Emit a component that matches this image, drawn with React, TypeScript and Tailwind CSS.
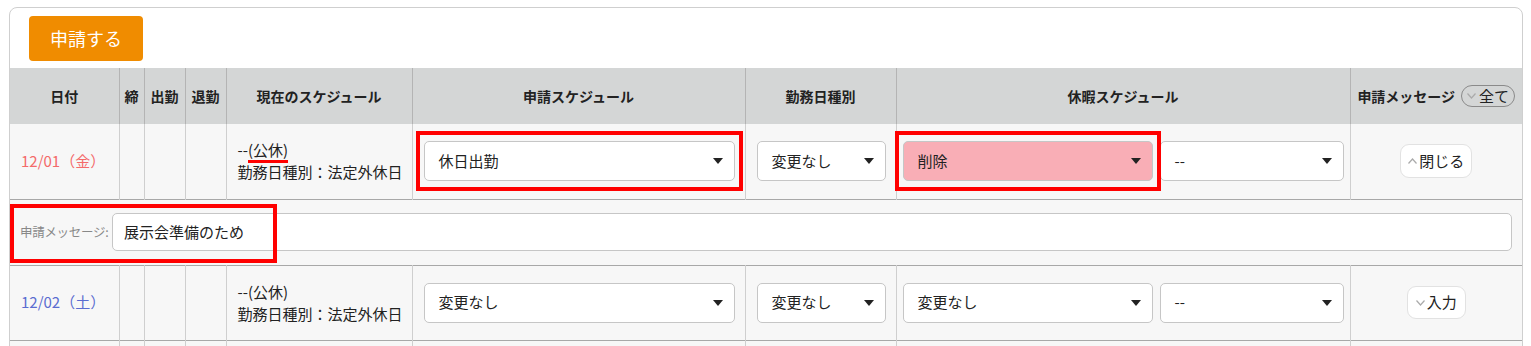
import type { ReactNode } from 'react';

const font = { fontFamily: '"Noto Sans CJK JP", "Noto Sans", sans-serif' };

function Caret() {
  return (
    <svg width="10" height="6" viewBox="0 0 10 6" className="shrink-0">
      <path d="M0 0 L10 0 L5 6 Z" fill="#222" />
    </svg>
  );
}

function Chevron({ up }: { up?: boolean }) {
  return (
    <svg width="9" height="6" viewBox="0 0 9 6" className="shrink-0">
      <polyline
        points={up ? '0.5,5.5 4.5,1 8.5,5.5' : '0.5,0.5 4.5,5 8.5,0.5'}
        fill="none"
        stroke="#aaa"
        strokeWidth="1.2"
      />
    </svg>
  );
}

function Select({ value, className = '', pink = false }: { value: string; className?: string; pink?: boolean }) {
  return (
    <div
      className={`h-[40px] flex items-center justify-between pl-[14px] pr-[11px] rounded-[5px] border border-[#c6c6c6] text-[15px] text-[#222] ${
        pink ? 'bg-[#f9aeb6]' : 'bg-white'
      } ${className}`}
    >
      <span>{value}</span>
      <Caret />
    </div>
  );
}

// red annotation frame drawn over a control
function Marked({ children, className = '' }: { children: ReactNode; className?: string }) {
  return (
    <div className={`relative ${className}`}>
      {children}
      <div className="absolute -left-[8px] -right-[8px] -top-[10px] -bottom-[10px] border-[4px] border-[#ff0000] pointer-events-none" />
    </div>
  );
}

const th = 'border-l border-[#b4b4b4] text-[14px] font-bold text-[#222] text-center';
const td = 'border-l border-[#cfcfcf] align-middle';

type Row = {
  date: string;
  dateColor: string;
  schedule: string;
  kind: string;
  leave: string;
  leaveSub: string;
  open: boolean;
  marked: boolean;
};

const rows: Row[] = [
  { date: '12/01（金）', dateColor: 'text-[#f46a6a]', schedule: '休日出勤', kind: '変更なし', leave: '削除', leaveSub: '--', open: true, marked: true },
  { date: '12/02（土）', dateColor: 'text-[#5a6cd0]', schedule: '変更なし', kind: '変更なし', leave: '変更なし', leaveSub: '--', open: false, marked: false },
];

function DayRow({ r }: { r: Row }) {
  return (
    <tr className="bg-[#f7f7f7] border-b border-[#a8a8a8] h-[75px]">
      <td className={`${td} border-l-0 pl-[11px] text-[15px] ${r.dateColor}`}>{r.date}</td>
      <td className={td}></td>
      <td className={td}></td>
      <td className={td}></td>
      <td className={`${td} pl-[11px] text-[15px] text-[#222] leading-[22px]`}>
        <div>
          --
          <span className="relative">
            (公休)
            {r.marked && <span className="absolute left-0 right-0 -bottom-[3px] h-[3px] bg-[#ff0000]" />}
          </span>
        </div>
        <div>勤務日種別：法定外休日</div>
      </td>
      <td className={`${td} pl-[11px] pr-[10px]`}>
        {r.marked ? (
          <Marked>
            <Select value={r.schedule} />
          </Marked>
        ) : (
          <Select value={r.schedule} />
        )}
      </td>
      <td className={`${td} pl-[11px] pr-[10px]`}>
        <Select value={r.kind} />
      </td>
      <td className={`${td} pl-[6px] pr-[6px]`}>
        <div className="flex gap-[7px]">
          {r.marked ? (
            <Marked className="w-[250px]">
              <Select value={r.leave} pink />
            </Marked>
          ) : (
            <Select value={r.leave} className="w-[250px]" />
          )}
          <Select value={r.leaveSub} className="flex-1" />
        </div>
      </td>
      <td className={`${td} text-center`}>
        {r.open ? (
          <button className="inline-flex items-center gap-[2px] h-[34px] px-[7px] bg-white border border-[#e2e2e2] rounded-[9px] text-[15px] text-[#222]">
            <Chevron up />
            閉じる
          </button>
        ) : (
          <button className="inline-flex items-center gap-[2px] h-[33px] px-[8px] bg-white border border-[#e2e2e2] rounded-[9px] text-[15px] text-[#222]">
            <Chevron />
            入力
          </button>
        )}
      </td>
    </tr>
  );
}

export default function App() {
  return (
    <div className="bg-white min-h-screen pt-[7px] pl-[9px]" style={font}>
      <div className="w-[1514px] border border-[#cfcfcf] rounded-t-[8px] bg-white">
        <div className="pt-[8px] pb-[7px] pl-[19px]">
          <button className="h-[45px] w-[114px] rounded-[4px] bg-[#f08c00] text-white text-[18px]">申請する</button>
        </div>
        <table className="w-[1512px] table-fixed border-collapse">
          <colgroup>
            <col className="w-[109px]" />
            <col className="w-[25px]" />
            <col className="w-[41px]" />
            <col className="w-[41px]" />
            <col className="w-[186px]" />
            <col className="w-[333px]" />
            <col className="w-[151px]" />
            <col className="w-[454px]" />
            <col className="w-[172px]" />
          </colgroup>
          <thead>
            <tr className="bg-[#d4d6d6] h-[56px]">
              <th className={`${th} border-l-0`}>日付</th>
              <th className={th}>締</th>
              <th className={th}>出勤</th>
              <th className={th}>退勤</th>
              <th className={th}>現在のスケジュール</th>
              <th className={th}>申請スケジュール</th>
              <th className={th}>勤務日種別</th>
              <th className={th}>休暇スケジュール</th>
              <th className={th}>
                <div className="flex items-center justify-center gap-[6px]">
                  <span>申請メッセージ</span>
                  <span className="inline-flex items-center gap-[3px] h-[22px] px-[5px] rounded-full border border-[#8a8a8a] font-normal text-[15px] text-[#222]">
                    <Chevron />
                    全て
                  </span>
                </div>
              </th>
            </tr>
          </thead>
          <tbody>
            <DayRow r={rows[0]} />
            <tr className="bg-[#f7f7f7] border-b border-[#a8a8a8] h-[66px]">
              <td colSpan={9} className="relative px-[10px]">
                <div className="flex items-center">
                  <span className="w-[92px] shrink-0 text-[12.5px] tracking-[-0.3px] text-[#888] whitespace-nowrap">
                    申請メッセージ:
                  </span>
                  <div className="flex-1 h-[38px] flex items-center pl-[11px] bg-white border border-[#c6c6c6] rounded-[5px] text-[15px] text-[#222]">
                    展示会準備のため
                  </div>
                </div>
                <div className="absolute left-0 top-[4px] w-[267px] h-[59px] border-[4px] border-[#ff0000] pointer-events-none" />
              </td>
            </tr>
            <DayRow r={rows[1]} />
            <tr className="bg-[#f7f7f7] h-[75px]">
              <td className={`${td} border-l-0`}></td>
              <td className={td}></td>
              <td className={td}></td>
              <td className={td}></td>
              <td className={td}></td>
              <td className={td}></td>
              <td className={td}></td>
              <td className={td}></td>
              <td className={td}></td>
            </tr>
          </tbody>
        </table>
      </div>
    </div>
  );
}
